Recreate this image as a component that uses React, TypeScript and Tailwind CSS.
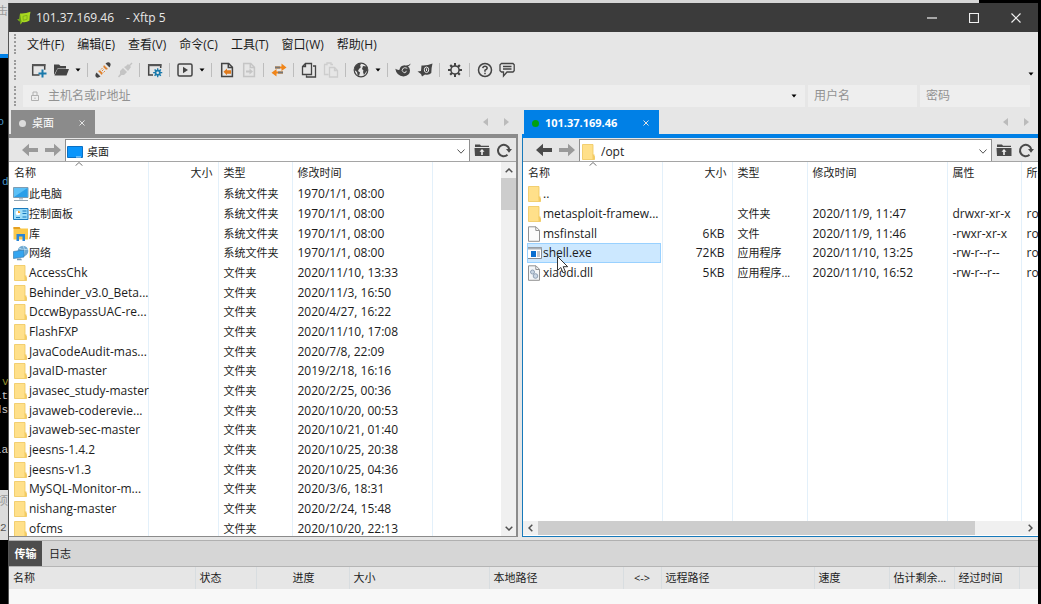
import React from "react";

type Entry = { name: string; icon: string; size?: string; type?: string; date?: string; attr?: string; owner?: string; selected?: boolean };

const dir = (name: string, date: string): Entry => ({ name, icon: "folder", type: "文件夹", date });
const sys = (name: string, icon: string): Entry => ({ name, icon, type: "系统文件夹", date: "1970/1/1, 08:00" });

const localFiles: Entry[] = [
  sys("此电脑", "pc"),
  sys("控制面板", "panel"),
  sys("库", "library"),
  sys("网络", "network"),
  dir("AccessChk", "2020/11/10, 13:33"),
  dir("Behinder_v3.0_Beta...", "2020/11/3, 16:50"),
  dir("DccwBypassUAC-re...", "2020/4/27, 16:22"),
  dir("FlashFXP", "2020/11/10, 17:08"),
  dir("JavaCodeAudit-mas...", "2020/7/8, 22:09"),
  dir("JavaID-master", "2019/2/18, 16:16"),
  dir("javasec_study-master", "2020/2/25, 00:36"),
  dir("javaweb-coderevie...", "2020/10/20, 00:53"),
  dir("javaweb-sec-master", "2020/10/21, 01:40"),
  dir("jeesns-1.4.2", "2020/10/25, 20:38"),
  dir("jeesns-v1.3", "2020/10/25, 04:36"),
  dir("MySQL-Monitor-m...", "2020/3/6, 18:31"),
  dir("nishang-master", "2020/2/24, 15:48"),
  dir("ofcms", "2020/10/20, 22:13"),
];

const remoteFiles: Entry[] = [
  { name: "..", icon: "folder" },
  { name: "metasploit-framew...", icon: "folder", type: "文件夹", date: "2020/11/9, 11:47", attr: "drwxr-xr-x", owner: "root" },
  { name: "msfinstall", icon: "file", size: "6KB", type: "文件", date: "2020/11/9, 11:46", attr: "-rwxr-xr-x", owner: "root" },
  { name: "shell.exe", icon: "exe", size: "72KB", type: "应用程序", date: "2020/11/10, 13:25", attr: "-rw-r--r--", owner: "root", selected: true },
  { name: "xiaodi.dll", icon: "dll", size: "5KB", type: "应用程序...", date: "2020/11/10, 16:52", attr: "-rw-r--r--", owner: "root" },
];

function FileIcon({ kind }: { kind: string }) {
  return (
    <svg viewBox="0 0 16 16" className="h-4 w-4 shrink-0" aria-hidden="true">
      {kind === "folder" && (
        <>
          <path d="M1.500.5h10.500v11l1.500 1v3h-12z" fill="#ffe08a" stroke="#efc65c" strokeWidth=".8" />
          <path d="M11.500 10.500h2v5h-2z" fill="#f3cb62" />
        </>
      )}
      {kind === "file" && (
        <>
          <path d="M1.500.8h7.500l3.500 3.500v11h-11z" fill="#fbfbfb" stroke="#929292" />
          <path d="M8.800 1v3.500h3.700" fill="none" stroke="#929292" />
        </>
      )}
      {kind === "exe" && (
        <>
          <path d="M.5 2.500h14v11H.5z" fill="#fff" stroke="#858b92" />
          <path d="M.5 2.500h14v2H.5z" fill="#a9b0b8" />
          <path d="M4 6h5v6H4z" fill="#0a6fd0" />
          <path d="M10 7h3M10 9h3M10 11h3" stroke="#8b9097" />
        </>
      )}
      {kind === "dll" && (
        <>
          <path d="M1.500.8h7.500l3.500 3.500v11h-11z" fill="#f4f6f8" stroke="#929292" />
          <path d="M8.800 1v3.500h3.700" fill="none" stroke="#929292" />
          <circle cx="5.500" cy="7" r="2" fill="#c9d6e4" stroke="#8fa0b4" strokeWidth="1" />
          <circle cx="8.500" cy="11" r="2.300" fill="#c9d6e4" stroke="#8fa0b4" strokeWidth="1" />
        </>
      )}
      {kind === "pc" && (
        <>
          <path d="M.5 1.500h14.500v10H.5z" fill="#5cc0f6" stroke="#7d9cb3" />
          <path d="M1 11 14.500 2v9z" fill="#2b9fe8" />
          <path d="M6 12h4v1.500H6z" fill="#b4c3ce" />
          <path d="M1 14h14v1H1z" fill="#8fa5b5" />
        </>
      )}
      {kind === "panel" && (
        <>
          <path d="M.5 2.500h14.500v11H.5z" fill="#9bdcf9" stroke="#1979bd" />
          <circle cx="5" cy="7" r="2.300" fill="#fff" />
          <path d="M5 7V4.700A2.300 2.300 0 0 1 7.300 7z" fill="#f0a030" />
          <path d="M9.500 5h4M9.500 7.500h4M3 11.500h4M9.500 11h4" stroke="#1979bd" strokeWidth="1.200" />
        </>
      )}
      {kind === "library" && (
        <>
          <path d="M.5 1h6l1 1.500H15v11H.5z" fill="#fbc94b" />
          <path d="M.5 1h6l1 2H.5z" fill="#e59f22" />
          <path d="M3.500 15V8h8.500v7H9.500v-4.500H6V15z" fill="#2b86d6" />
        </>
      )}
      {kind === "network" && (
        <>
          <circle cx="10" cy="6" r="5.300" fill="#6fa8cf" />
          <path d="M6 3c3 2 7 2 9 1M10 1c2 3 2 7 0 10" stroke="#b7dcf3" fill="none" />
          <path d="M.5 6.500 11 5v7L.5 13.500z" fill="#34a5f0" stroke="#3c7eaf" strokeWidth=".7" />
          <path d="M4 13.500h4l1 1.700H4z" fill="#7b97ab" />
        </>
      )}
    </svg>
  );
}

const gear =
  "M9 3.300V1H7v2.300l-1.300.5L4 2.300 2.500 3.800l1.400 1.700L3.300 7H1v2h2.300l.6 1.400-1.500 1.700L3.900 13.600l1.700-1.500 1.400.6V15h2v-2.300l1.400-.6 1.700 1.500 1.500-1.500-1.500-1.700.6-1.400H15V7h-2.300l-.6-1.500 1.500-1.700-1.500-1.500-1.700 1.500z";

function ToolIcon({ kind }: { kind: string }) {
  const s = { fill: "none", stroke: "#444", strokeWidth: 1.5 } as const;
  return (
    <svg viewBox="0 0 16 16" className="h-4 w-4 shrink-0" aria-hidden="true">
      {kind === "new" && (
        <>
          <path d="M8.500 13H1.700V2.700h12v5" {...s} />
          <path d="M1 2h13.400v2.200H1z" fill="#555" />
          <path d="M11.500 7.500v8M7.500 11.500h8" stroke="#1979ab" strokeWidth="2" />
        </>
      )}
      {kind === "open" && (
        <>
          <path d="M1 13V2.500h5L7.500 4H13v2.500H4.500z" fill="#444" />
          <path d="M4.500 7H16l-2.500 6.500H1.500z" fill="#444" />
        </>
      )}
      {kind === "connect" && (
        <>
          <path d="M10.500 1.500 14.500 5.500Q16.500 2.500 15 1T10.500 1.500M1.500 10.500l4 4Q2.500 16.500 1 15t.5-4.500" fill="#444" />
          <path d="M9 3 13 7 11 7.800 8.200 5zM5 8.200 7.800 11 6.800 13 3 9z" fill="#e08330" />
          <path d="M7 9l1.500-1.500M8.500 10.500 10 9M6 7.500 7.500 6" stroke="#e08330" strokeWidth=".9" />
        </>
      )}
      {kind === "disconnect" && (
        <>
          <path d="M9 4l2-2 1 1 2.500-2.500 1 1L13 4l1 1-3 4-4-4zM6 6l4 4-3 3H4.500L2 15.500l-1-1L3 12V9z" fill="#c4c4c4" />
        </>
      )}
      {kind === "props" && (
        <>
          <path d="M6 13H1.700V2.700h12V6" {...s} />
          <path d="M1 2h13.400v2.200H1z" fill="#555" />
          <g transform="translate(5.500 5.500) scale(.65)">
            <path d={gear} fill="#1979ab" />
            <circle cx="8" cy="8" r="2" fill="#e6e6e6" />
          </g>
        </>
      )}
      {kind === "play" && (
        <>
          <rect x="1" y="2" width="14" height="12" rx="1.500" {...s} />
          <path d="M6 4.800 11 8l-5 3.200z" fill="#444" />
        </>
      )}
      {(kind === "docLeft" || kind === "docRight") && (
        <g opacity={kind === "docRight" ? 0.2 : 1}>
          <path d="M2.700 1.500h7l3.700 3.700v9.300H2.700z" {...s} />
          <path d="M9.300 1.500v4h4" {...s} />
          {kind === "docLeft" ? (
            <path d="M4.500 9.800 8 6.500v1.700h4v3.600H8v1.500z" fill="#e07a1c" />
          ) : (
            <path d="M12 9.500 8.500 6.500v2H5v2h3.500v2z" fill="#444" />
          )}
        </g>
      )}
      {kind === "swap" && (
        <>
          <path d="M4 4.500h6.500V1.500L15.500 5.500 10.500 9V6.500H4z" fill="#f08519" />
          <path d="M4 4.500h5v2H4z" fill="#777" />
          <path d="M12 9.500H5.500V7L.5 10.800 5.500 14.500v-3H12z" fill="#f08519" />
          <path d="M7 9.500h5v2H7z" fill="#777" />
        </>
      )}
      {(kind === "copy" || kind === "paste") && (
        <g opacity={kind === "paste" ? 0.15 : 1}>
          {kind === "copy" ? (
            <path d="M4.500 1.500h6v11h-9V4.500zM4.500 1.500v3h-3M12 4h2.500v11H5.500v-1.500" {...s} strokeWidth="1.300" />
          ) : (
            <path d="M1 2.500h3V1h4v1.500h2M1.500 2.500v10h4M6.500 5.500h5l3 3v6.500h-8zM11.500 5.500v3h3" {...s} strokeWidth="1.300" />
          )}
        </g>
      )}
      {kind === "globe" && (
        <>
          <circle cx="8" cy="8" r="6.800" {...s} strokeWidth="1.200" />
          <path d="M2 5Q4 1.500 8 1.800L7 4l1 1-2 2-1 2 2 1.500L6 14Q4 13 4 10L1.500 8zM10 4l4 .5.5 4-1.500 1.500L11 13l-1-3 .5-1.500L9 7z" fill="#444" />
        </>
      )}
      {kind === "xshell" && (
        <>
          <path d="M15.800 1.500Q13 4 9.500 3.200 5 3.500 4.500 7.800 2.500 8.300.3 6.800 1.500 14 8.500 14.500 15 13.500 15 8.500 14.800 5.500 13 4.600 15.200 3.600 15.800 1.500" fill="#444" />
          <path d="M12.300 6.300Q9.500 4.800 7.700 6.700T9 10.800q2.500 0 2.200-2" fill="none" stroke="#e6e6e6" strokeWidth=".9" />
        </>
      )}
      {kind === "xftp" && (
        <>
          <path d="M4.500 3.500Q10 4 15.500 1.500 14.500 5 14.300 11 12 13.500 8 12.500L5 14.500 4 12 .5 9.500 4 9z" fill="#444" />
          <ellipse cx="9.500" cy="7.800" rx="2.200" ry="2.800" fill="none" stroke="#e6e6e6" />
          <path d="M9.500 6.500v2.500" stroke="#e6e6e6" />
        </>
      )}
      {kind === "gear" && (
        <>
          <path d={gear} fill="#444" />
          <circle cx="8" cy="8" r="3.300" fill="#e6e6e6" />
        </>
      )}
      {kind === "help" && (
        <>
          <circle cx="8" cy="8" r="6.500" {...s} />
          <path d="M5.800 6.200Q6 4.300 8 4.300t2.200 1.900Q10 7.500 8 8.200v1.500M8 10.800v1.500" {...s} />
        </>
      )}
      {kind === "chat" && (
        <path d="M2.500 1.500h11.500l1.200 1.200v6L14 10H8l-3.500 4V10h-2L1 8.700v-6zM4 4.500h8.500M4 7h8.500" {...s} strokeWidth="1.300" />
      )}
    </svg>
  );
}

function Caret() {
  return (
    <svg viewBox="0 0 6 4" className="h-1 w-1.5 shrink-0" aria-hidden="true">
      <path d="M.5.5h5L3 3.500z" fill="#000" />
    </svg>
  );
}

const toolGroups: { icons: [string, string][]; caret?: boolean; width: string }[] = [
  { icons: [["new", "新建"], ["open", "打开"]], caret: true, width: "w-16" },
  { icons: [["connect", "连接"], ["disconnect", "断开"]], width: "w-[52px]" },
  { icons: [["props", "属性"]], width: "w-[30px]" },
  { icons: [["play", "运行"]], caret: true, width: "w-[42px]" },
  { icons: [["docLeft", "下载"], ["docRight", "上传"]], width: "w-[52px]" },
  { icons: [["swap", "同步"]], width: "w-[30px]" },
  { icons: [["copy", "复制"], ["paste", "粘贴"]], width: "w-[52px]" },
  { icons: [["globe", "编码"]], caret: true, width: "w-[42px]" },
  { icons: [["xshell", "Xshell"], ["xftp", "Xftp"]], width: "w-[52px]" },
  { icons: [["gear", "选项"]], width: "w-[30px]" },
  { icons: [["help", "帮助"], ["chat", "反馈"]], width: "w-[52px]" },
];

function Grip() {
  return <span className="h-5 shrink-0 border-l-2 border-dotted border-[#9a9a9a]" />;
}

function TabArrows() {
  return (
    <div className="ml-auto flex h-6 items-center gap-2 pr-2">
      {["M6 1v8L1 5z", "M4 1v8l5-4z"].map((d, i) => (
        <button key={d} aria-label={i ? "下一个" : "上一个"}>
          <svg viewBox="0 0 10 10" className="block h-2.5 w-2.5">
            <path d={d} fill="#bbb" />
          </svg>
        </button>
      ))}
    </div>
  );
}

function Arrow({ right, color, label }: { right?: boolean; color: string; label: string }) {
  return (
    <button aria-label={label}>
      <svg viewBox="0 0 16 14" className="h-3.5 w-4">
        <path d={right ? "M16 7 9 .8v4.200H0v4h9v4.200z" : "M0 7 7 .8v4.200h9v4H7v4.200z"} fill={color} />
      </svg>
    </button>
  );
}

function Pane({ remote }: { remote?: boolean }) {
  const files = remote ? remoteFiles : localFiles;
  const line = remote ? "border-[#1779ba]" : "border-[#8b8b8b]";
  const col = "border-r border-[#e3f0fa]";
  return (
    <section className="flex min-h-0 min-w-0 flex-col">
      <div className="flex h-[27px] shrink-0 items-end pl-0.5">
        <div className={`flex h-6 items-center pt-0.5 pr-2.5 pl-2 text-white ${remote ? "w-[135px] bg-[#0080e6]" : "w-[84px] bg-[#8b8b8b]"}`}>
          <span className={`h-[7px] w-[7px] rounded-full ${remote ? "bg-[#00a010]" : "bg-[#dcdcdc]"}`} />
          <span className={`ml-1.5 text-[11px] ${remote ? "font-bold" : ""}`}>{remote ? "101.37.169.46" : "桌面"}</span>
          <button className="ml-auto" aria-label="关闭">
            <svg viewBox="0 0 6 6" className="h-1.5 w-1.5">
              <path d="M.5.5l5 5M5.500.5l-5 5" stroke="#e4e4e4" fill="none" />
            </svg>
          </button>
        </div>
        <TabArrows />
      </div>
      <div className={`h-1 shrink-0 ${remote ? "bg-[#0080e6]" : "bg-[#8b8b8b]"}`} />
      <div className={`flex min-h-0 flex-1 flex-col border-b ${line} ${remote ? "border-l" : "border-r-2"}`}>
        <div className="flex h-[24px] shrink-0 items-stretch border-b border-[#a5a5a5] bg-[#e6e6e6] pt-px">
          <div className="flex w-[56px] items-center justify-end gap-[7px] pr-1">
            <Arrow color={remote ? "#4a4a4a" : "#9a9a9a"} label="后退" />
            <Arrow right color="#9a9a9a" label="前进" />
          </div>
          <div className="flex flex-1 items-center border border-b-0 border-[#8f8f8f] bg-white pt-0.5 pr-1 pl-px">
            {remote ? (
              <FileIcon kind="folder" />
            ) : (
              <svg viewBox="0 0 16 12" className="h-3 w-4" aria-hidden="true">
                <path d="M.5.5h15v11H.5z" fill="#0a95fb" stroke="#0b70c4" />
                <path d="M9 11h5" stroke="#bfe4ff" />
              </svg>
            )}
            <input aria-label="路径" defaultValue={remote ? "/opt" : "桌面"} className={`min-w-0 flex-1 bg-transparent pl-1 outline-none ${remote ? "text-[12px]" : "text-[11px]"}`} />
            <button aria-label="展开">
              <svg viewBox="0 0 8 5" className="h-[5px] w-2">
                <path d="M.5.5 4 4.200 7.500.5" fill="none" stroke="#555" />
              </svg>
            </button>
          </div>
          <div className="flex w-[46px] items-center justify-end gap-[6px] pr-1">
            <button aria-label="上一级">
              <svg viewBox="0 0 16 14" className="block h-3.5 w-4">
                <path d="M1 1.500h5l1 1.200h8V4H1zM.5 5h15v8H1z" fill="#4a4a4a" />
                <path d="M8 6 5.500 8.800H7.200V12h1.600V8.800h1.700z" fill="#f0f0f0" />
              </svg>
            </button>
            <button aria-label="刷新">
              <svg viewBox="0 0 16 16" className="block h-4 w-4">
                <path d="M11.500 12.800A5.700 5.700 0 1 1 13.200 7" fill="none" stroke="#4a4a4a" strokeWidth="2" />
                <path d="M10 7h6l-3 3.800z" fill="#4a4a4a" />
              </svg>
            </button>
          </div>
        </div>
        <div className="flex min-h-0 flex-1 bg-white">
          <div className="min-w-0 flex-1 overflow-hidden">
            <table className="h-full w-full table-fixed border-collapse text-left leading-4 whitespace-nowrap">
              <colgroup>
                <col className="w-[139px]" />
                <col className="w-[70px]" />
                <col className={remote ? "w-[75px]" : "w-[74px]"} />
                <col className="w-[140px]" />
                {remote && <col className="w-[74px]" />}
                <col />
              </colgroup>
              <thead>
                <tr className="h-[22px] text-[11px]">
                  <th className={`relative p-0 pl-[5px] font-normal ${col}`}>
                    名称
                    <svg viewBox="0 0 8 4" className="absolute top-0 left-[66px] h-1 w-2" aria-hidden="true">
                      <path d="M.5 3.700 4 .5l3.500 3.200" fill="none" stroke="#777" />
                    </svg>
                  </th>
                  <th className={`p-0 pr-[5px] text-right font-normal ${col}`}>大小</th>
                  <th className={`p-0 pl-[5px] font-normal ${col}`}>类型</th>
                  <th className={`p-0 pl-[5px] font-normal ${col}`}>修改时间</th>
                  {remote && <th className={`p-0 pl-[5px] font-normal ${col}`}>属性</th>}
                  <th className="overflow-hidden p-0 pl-[5px] font-normal">{remote ? "所有者" : ""}</th>
                </tr>
              </thead>
              <tbody>
                {files.map((f) => (
                  <tr key={f.name} className="h-5 text-[12px] nth-[3n]:h-[19px]">
                    <td className={`p-0 pl-1 ${col}`}>
                      <div className={`flex items-center ${f.selected ? "-my-px mr-px h-5 bg-[#cce8ff] outline outline-1 -outline-offset-1 outline-[#99d1ff]" : ""}`}>
                        <FileIcon kind={f.icon} />
                        <span className={f.type === "系统文件夹" ? "text-[11px]" : ""}>{f.name}</span>
                      </div>
                    </td>
                    <td className={`p-0 pr-[7px] text-right ${col}`}>{f.size}</td>
                    <td className={`p-0 pl-[5px] text-[11px] ${col}`}>{f.type}</td>
                    <td className={`p-0 pl-[5px] ${col}`}>{f.date}</td>
                    {remote && <td className={`p-0 pl-[5px] ${col}`}>{f.attr}</td>}
                    <td className="overflow-hidden p-0 pl-[5px]">{f.owner}</td>
                  </tr>
                ))}
                {remote && (
                  <tr>
                    <td className={col} />
                    <td className={col} />
                    <td className={col} />
                    <td className={col} />
                    <td className={col} />
                    <td />
                  </tr>
                )}
              </tbody>
            </table>
          </div>
          {!remote && (
            <div className="flex w-[15px] shrink-0 flex-col items-center bg-[#f0f0f0]">
              <button aria-label="向上滚动" className="grid h-4 w-full place-items-center">
                <svg viewBox="0 0 8 5" className="h-[5px] w-2"><path d="M.7 4.300 4 1l3.300 3.300" fill="none" stroke="#505050" strokeWidth="1.500" /></svg>
              </button>
              <div className="h-8 w-full bg-[#cdcdcd]" />
              <button aria-label="向下滚动" className="mt-auto grid h-4 w-full place-items-center">
                <svg viewBox="0 0 8 5" className="h-[5px] w-2"><path d="M.7.7 4 4 7.300.7" fill="none" stroke="#505050" strokeWidth="1.500" /></svg>
              </button>
            </div>
          )}
        </div>
        {remote && (
          <div className="flex h-[15px] shrink-0 items-stretch border-b border-white bg-[#f0f0f0]">
            <button aria-label="向左滚动" className="grid w-[15px] place-items-center">
              <svg viewBox="0 0 5 8" className="h-2 w-[5px]"><path d="M4.300.7 1 4l3.300 3.300" fill="none" stroke="#505050" strokeWidth="1.500" /></svg>
            </button>
            <div className="flex flex-1">
              <div className="w-[90%] bg-[#cdcdcd]" />
            </div>
            <button aria-label="向右滚动" className="grid w-[15px] place-items-center">
              <svg viewBox="0 0 5 8" className="h-2 w-[5px]"><path d="M.7.7 4 4 .7 7.300" fill="none" stroke="#505050" strokeWidth="1.500" /></svg>
            </button>
          </div>
        )}
      </div>
    </section>
  );
}

const queueColumns: [string, string][] = [
  ["名称", "w-[186px] pl-1"],
  ["状态", "w-[61px] pl-1"],
  ["进度", "w-[93px] pr-[34px] text-right"],
  ["大小", "w-[140px] pl-1"],
  ["本地路径", "w-[134px] pl-1"],
  ["<->", "w-[38px] text-center"],
  ["远程路径", "w-[153px] pl-1"],
  ["速度", "w-[75px] pl-1"],
  ["估计剩余...", "w-[65px] pl-1"],
  ["经过时间", "w-[65px] pl-1"],
  ["", ""],
];

export default function App() {
  return (
    <div className="flex h-screen overflow-hidden bg-black font-['Open_Sans','Noto_Sans_CJK_SC',sans-serif] text-[12px] leading-4 text-[#1c1c1c]">
      <aside className="flex w-2 shrink-0 flex-col overflow-hidden font-['Liberation_Mono','Noto_Sans_CJK_SC',monospace] text-[11px] whitespace-nowrap text-[#c8c8c8]">
        <div className="flex h-[54px] shrink-0 justify-end bg-[#dedede] pt-1 text-[#9a9a9a]">击</div>
        <div className="h-1 shrink-0 bg-[#0080e6]" />
        <div className="flex flex-1 flex-col justify-between pt-14">
          <div className="text-[#4795c8]">
            <p className="flex justify-end pr-1 pb-11">o</p>
            <p className="pl-0.5">d</p>
          </div>
          <div className="pb-8">
            <p className="pl-0.5 text-[#97912f]">v</p>
            <p className="flex justify-end leading-3">it</p>
            <p className="flex justify-end">ds</p>
            <p className="flex justify-end pt-6">la</p>
          </div>
        </div>
        <div className="flex h-[50px] shrink-0 flex-col justify-between bg-[#dcdcdc] py-1 text-[#555]">
          <span className="flex justify-end text-[#999]">项</span>
          <span>2</span>
        </div>
        <div className="h-16 shrink-0" />
      </aside>
      <div className="flex min-w-0 flex-1 flex-col">
        <div className="flex h-[3px] shrink-0">
          <div className="flex-1 bg-[#d6d6d6]" />
          <div className="w-[62px] bg-black" />
        </div>
        <main className="mr-[3px] flex min-h-0 flex-1 flex-col border-l border-[#555] bg-[#e6e6e6]">
          <header className="flex h-[29px] shrink-0 items-center bg-[#3b3b3b] pl-2 text-[#e8e8e8]">
            <svg viewBox="0 0 14 14" className="h-3.5 w-3.5" aria-hidden="true">
              <path d="M3 2.500Q8 3 13.500.8 12.500 5 12.500 9.500 9 12 5.500 11L3.500 13.500 3 10.500.3 8.500 2.500 8z" fill="#a8d820" />
              <path d="M3 2.500 4.500 11 3.500 13.500 3 10.500.3 8.500 2.500 8z" fill="#6aa014" />
              <path d="M6 5.300 10 4.300v4L6.300 9.300z" fill="none" stroke="#7fae18" strokeWidth=".9" />
            </svg>
            <h1 className="flex gap-3 pl-[5px] text-[12px]">
              <span>101.37.169.46</span>
              <span>- Xftp 5</span>
            </h1>
            <div className="ml-auto flex gap-8 pr-[17px]">
              {["M0 6h10", "M.5 1.500h9v9h-9z", "M.5 1.500l9 9M9.500 1.500l-9 9"].map((d, i) => (
                <button key={d} aria-label={["最小化", "最大化", "关闭"][i]}>
                  <svg viewBox="0 0 10 12" className="h-3 w-2.5">
                    <path d={d} fill="none" stroke="#f0f0f0" strokeWidth="1.200" />
                  </svg>
                </button>
              ))}
            </div>
          </header>
          <nav className="flex h-6 shrink-0 items-center pl-[5px]">
            <Grip />
            <div className="flex gap-[13px] pt-0.5 pl-[11px]">
              {["文件(F)", "编辑(E)", "查看(V)", "命令(C)", "工具(T)", "窗口(W)", "帮助(H)"].map((m) => (
                <button key={m}>{m}</button>
              ))}
            </div>
          </nav>
          <div className="flex h-7 shrink-0 items-center pl-[5px]">
            <Grip />
            <div className="flex pl-2">
              {toolGroups.map((g) => (
                <div key={g.width + g.icons[0][0]} className={`flex h-3.5 items-center justify-center gap-1.5 border-r border-[#bdbdbd] last:border-0 ${g.width}`}>
                  {g.icons.map(([kind, label]) => (
                    <button key={kind} aria-label={label}>
                      <ToolIcon kind={kind} />
                    </button>
                  ))}
                  {g.caret && <Caret />}
                </div>
              ))}
            </div>
            <div className="ml-auto pt-2 pr-1">
              <Caret />
            </div>
          </div>
          <form className="flex h-[23px] shrink-0 items-center gap-[3px] pr-2 pl-[5px]">
            <Grip />
            <label className="ml-1 flex h-[22px] flex-1 items-center bg-[#eee] pr-2 pl-2">
              <svg viewBox="0 0 8 10" className="h-2.5 w-2" aria-hidden="true">
                <path d="M.5 4.500h7v5h-7zM2 4.500V1h4v3.500M4 6.500v1.500" fill="none" stroke="#b0b0b0" />
              </svg>
              <input aria-label="主机" placeholder="主机名或IP地址" className="min-w-0 flex-1 bg-transparent pl-[9px] outline-none placeholder:text-[#929292]" />
              <Caret />
            </label>
            <input aria-label="用户名" placeholder="用户名" className="h-[22px] w-[109px] bg-[#eee] pl-1.5 outline-none placeholder:text-[#929292]" />
            <input aria-label="密码" placeholder="密码" className="h-[22px] w-[110px] bg-[#eee] pl-1.5 outline-none placeholder:text-[#929292]" />
          </form>
          <div className="grid min-h-0 flex-1 grid-cols-[minmax(0,509fr)_4px_minmax(0,516fr)]">
            <Pane />
            <div />
            <Pane remote />
          </div>
          <footer className="mt-[3px] h-16 shrink-0 border-t border-[#b0b0b0] bg-[#f8f8f8]">
            <div className="flex h-[26px] items-stretch border-b border-[#b5b5b5] bg-[#d6d6d6] text-[11px]">
              <button className="w-[33px] bg-[#4d4d4d] font-bold text-white">传输</button>
              <button className="px-[7px]">日志</button>
            </div>
            <table className="w-full table-fixed border-collapse text-left text-[11px] whitespace-nowrap">
              <thead>
                <tr className="h-[22px] bg-[#e6e6e6]">
                  {queueColumns.map(([name, layout], i) => (
                    <th key={i} className={`border-r border-[#d8dde0] py-0 pr-0 font-normal last:border-0 ${layout}`}>
                      {name}
                    </th>
                  ))}
                </tr>
              </thead>
            </table>
          </footer>
        </main>
      </div>
      <svg viewBox="0 0 12 18" className="absolute top-[256px] left-[557px] h-[18px] w-3" aria-hidden="true">
        <path d="M.5.5v14l3.300-3L6 16.800l2.400-1L6.200 10.700h4.500z" fill="#fff" stroke="#333" />
      </svg>
    </div>
  );
}
